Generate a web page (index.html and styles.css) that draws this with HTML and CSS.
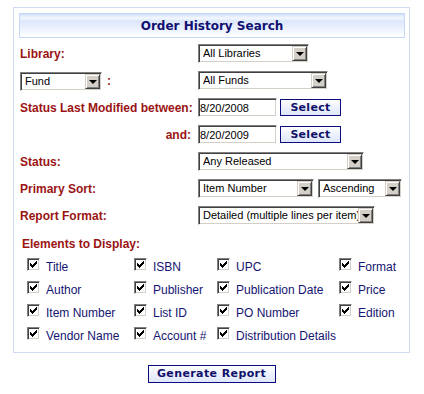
FILE: index.html
```html
<!DOCTYPE html>
<html lang="en">
<head>
    <meta charset="UTF-8">
    <title>Order History Search</title>
    <link rel="stylesheet" href="styles.css">
</head>
<body>
    <div class="panel">
        <div class="panel-title">Order History Search</div>

        <div class="form-rows">
            <div class="lbl">Library:</div>
            <div class="fld">
                <span class="combo w-lib"><select><option>All Libraries</option></select><span class="drop"></span></span>
            </div>

            <div class="lbl">
                <span class="combo w-fund"><select><option>Fund</option></select><span class="drop"></span></span>
                <span class="colon">:</span>
            </div>
            <div class="fld">
                <span class="combo w-funds"><select><option>All Funds</option></select><span class="drop"></span></span>
            </div>

            <div class="lbl">Status Last Modified between:</div>
            <div class="fld date-row">
                <input type="text" class="date" value="8/20/2008">
                <button type="button" class="btn btn-select">Select</button>
            </div>

            <div class="lbl right">and:</div>
            <div class="fld date-row">
                <input type="text" class="date" value="8/20/2009">
                <button type="button" class="btn btn-select">Select</button>
            </div>

            <div class="lbl">Status:</div>
            <div class="fld">
                <span class="combo w-status"><select><option>Any Released</option></select><span class="drop"></span></span>
            </div>

            <div class="lbl">Primary Sort:</div>
            <div class="fld">
                <span class="combo w-sort"><select><option>Item Number</option></select><span class="drop"></span></span>
                <span class="combo w-order"><select><option>Ascending</option></select><span class="drop"></span></span>
            </div>

            <div class="lbl">Report Format:</div>
            <div class="fld">
                <span class="combo w-format"><select><option>Detailed (multiple lines per item)</option></select><span class="drop"></span></span>
            </div>
        </div>

        <div class="elements-title">Elements to Display:</div>
        <div class="elements">
            <label class="el"><span class="cb"><svg width="7" height="7" viewBox="0 0 7 7"><path d="M0 2V5H1V6H2V7H3V6H4V5H5V4H6V3H7V0H6V1H5V2H4V3H3V4H2V3H1V2Z"/></svg></span><span>Title</span></label>
            <label class="el"><span class="cb"><svg width="7" height="7" viewBox="0 0 7 7"><path d="M0 2V5H1V6H2V7H3V6H4V5H5V4H6V3H7V0H6V1H5V2H4V3H3V4H2V3H1V2Z"/></svg></span><span>ISBN</span></label>
            <label class="el"><span class="cb"><svg width="7" height="7" viewBox="0 0 7 7"><path d="M0 2V5H1V6H2V7H3V6H4V5H5V4H6V3H7V0H6V1H5V2H4V3H3V4H2V3H1V2Z"/></svg></span><span>UPC</span></label>
            <label class="el"><span class="cb"><svg width="7" height="7" viewBox="0 0 7 7"><path d="M0 2V5H1V6H2V7H3V6H4V5H5V4H6V3H7V0H6V1H5V2H4V3H3V4H2V3H1V2Z"/></svg></span><span>Format</span></label>

            <label class="el"><span class="cb"><svg width="7" height="7" viewBox="0 0 7 7"><path d="M0 2V5H1V6H2V7H3V6H4V5H5V4H6V3H7V0H6V1H5V2H4V3H3V4H2V3H1V2Z"/></svg></span><span>Author</span></label>
            <label class="el"><span class="cb"><svg width="7" height="7" viewBox="0 0 7 7"><path d="M0 2V5H1V6H2V7H3V6H4V5H5V4H6V3H7V0H6V1H5V2H4V3H3V4H2V3H1V2Z"/></svg></span><span>Publisher</span></label>
            <label class="el"><span class="cb"><svg width="7" height="7" viewBox="0 0 7 7"><path d="M0 2V5H1V6H2V7H3V6H4V5H5V4H6V3H7V0H6V1H5V2H4V3H3V4H2V3H1V2Z"/></svg></span><span>Publication Date</span></label>
            <label class="el"><span class="cb"><svg width="7" height="7" viewBox="0 0 7 7"><path d="M0 2V5H1V6H2V7H3V6H4V5H5V4H6V3H7V0H6V1H5V2H4V3H3V4H2V3H1V2Z"/></svg></span><span>Price</span></label>

            <label class="el"><span class="cb"><svg width="7" height="7" viewBox="0 0 7 7"><path d="M0 2V5H1V6H2V7H3V6H4V5H5V4H6V3H7V0H6V1H5V2H4V3H3V4H2V3H1V2Z"/></svg></span><span>Item Number</span></label>
            <label class="el"><span class="cb"><svg width="7" height="7" viewBox="0 0 7 7"><path d="M0 2V5H1V6H2V7H3V6H4V5H5V4H6V3H7V0H6V1H5V2H4V3H3V4H2V3H1V2Z"/></svg></span><span>List ID</span></label>
            <label class="el"><span class="cb"><svg width="7" height="7" viewBox="0 0 7 7"><path d="M0 2V5H1V6H2V7H3V6H4V5H5V4H6V3H7V0H6V1H5V2H4V3H3V4H2V3H1V2Z"/></svg></span><span>PO Number</span></label>
            <label class="el"><span class="cb"><svg width="7" height="7" viewBox="0 0 7 7"><path d="M0 2V5H1V6H2V7H3V6H4V5H5V4H6V3H7V0H6V1H5V2H4V3H3V4H2V3H1V2Z"/></svg></span><span>Edition</span></label>

            <label class="el"><span class="cb"><svg width="7" height="7" viewBox="0 0 7 7"><path d="M0 2V5H1V6H2V7H3V6H4V5H5V4H6V3H7V0H6V1H5V2H4V3H3V4H2V3H1V2Z"/></svg></span><span>Vendor Name</span></label>
            <label class="el"><span class="cb"><svg width="7" height="7" viewBox="0 0 7 7"><path d="M0 2V5H1V6H2V7H3V6H4V5H5V4H6V3H7V0H6V1H5V2H4V3H3V4H2V3H1V2Z"/></svg></span><span>Account #</span></label>
            <label class="el"><span class="cb"><svg width="7" height="7" viewBox="0 0 7 7"><path d="M0 2V5H1V6H2V7H3V6H4V5H5V4H6V3H7V0H6V1H5V2H4V3H3V4H2V3H1V2Z"/></svg></span><span>Distribution Details</span></label>
        </div>
    </div>

    <div class="actions">
        <button type="button" class="btn btn-generate">Generate Report</button>
    </div>
</body>
</html>
```

FILE: styles.css
```css
body {
    font-family: "Liberation Sans", Arial, sans-serif;
    font-size: 12px;
    margin: 0;
    padding: 0;
    background-color: #fff;
    color: #000;
}

.panel {
    width: 397px;
    box-sizing: border-box;
    margin: 7px 0 0 13px;
    padding: 5px 4px 7px 5px;
    border: 1px solid #cfdaf3;
}

.panel-title {
    height: 25px;
    box-sizing: border-box;
    padding-top: 1px;
    border: 1px solid #c6d6f5;
    background: linear-gradient(#d3e0fa 0, #f3f7fe 18%, #dce7fc 30%, #eef3fe 70%, #fff 100%);
    color: #101070;
    font-family: "DejaVu Sans", Verdana, sans-serif;
    font-weight: bold;
    font-size: 12px;
    line-height: 23px;
    text-align: center;
}

.form-rows {
    display: grid;
    grid-template-columns: 178px auto;
    row-gap: 8px;
    align-items: center;
    margin-top: 6px;
    padding-left: 1px;
}

.lbl {
    display: flex;
    align-items: center;
    height: 19px;
    padding-top: 1px;
    box-sizing: border-box;
    color: #9a1414;
    font-weight: bold;
}

.lbl.right {
    justify-content: flex-end;
    padding-right: 7px;
}

.colon {
    margin-left: 5px;
}

.fld {
    display: flex;
    align-items: center;
    gap: 4px;
    height: 19px;
}

.fld.date-row {
    gap: 3px;
}

/* classic sunken combo box */
.combo {
    display: inline-flex;
    height: 19px;
    box-sizing: border-box;
    border: 1px solid;
    border-color: #808080 #fff #fff #808080;
    box-shadow: inset 1px 1px #404040, inset -1px -1px #d4d0c8;
    padding: 1px;
    background: #fff;
}

.combo select {
    -webkit-appearance: none;
    appearance: none;
    flex: 1;
    min-width: 0;
    border: none;
    outline: none;
    background: #fff;
    font-family: "Liberation Sans", Arial, sans-serif;
    font-size: 11px;
    color: #000;
    padding: 0 0 0 3px;
    margin: 0;
    height: 15px;
    line-height: 15px;
}

.drop {
    width: 15px;
    height: 15px;
    box-sizing: border-box;
    background: #d4d0c8;
    border: 1px solid;
    border-color: #d4d0c8 #404040 #404040 #d4d0c8;
    box-shadow: inset 1px 1px #fff, inset -1px -1px #808080;
    display: flex;
    align-items: center;
    justify-content: center;
}

.drop::after {
    content: "";
    width: 0;
    height: 0;
    border-left: 4px solid transparent;
    border-right: 4px solid transparent;
    border-top: 4px solid #000;
    margin-top: 1px;
}

.w-lib { width: 111px; }
.w-fund { width: 82px; }
.w-funds { width: 130px; }
.w-status { width: 166px; }
.w-sort { width: 116px; }
.w-order { width: 84px; }
.w-format { width: 177px; }

.date {
    width: 79px;
    height: 19px;
    box-sizing: border-box;
    margin: 0;
    padding: 0 0 0 1px;
    border: 1px solid;
    border-color: #808080 #fff #fff #808080;
    box-shadow: inset 1px 1px #404040, inset -1px -1px #d4d0c8;
    font-family: "Liberation Sans", Arial, sans-serif;
    font-size: 11px;
    color: #000;
    outline: none;
}

.btn {
    font-family: "DejaVu Sans", Verdana, sans-serif;
    font-weight: bold;
    font-size: 11px;
    color: #10106a;
    border: 1px solid #0c0c80;
    background: linear-gradient(#ffffff 0, #eef2fd 45%, #dfe7fb 100%);
    padding: 0;
    margin: 0;
    cursor: pointer;
}

.btn-select {
    width: 61px;
    height: 17px;
    line-height: 15px;
    letter-spacing: 0.3px;
}

.elements-title {
    margin-top: 12px;
    padding-left: 3px;
    color: #9a1414;
    font-weight: bold;
    line-height: 14px;
}

.elements {
    display: grid;
    grid-template-columns: 107px 83px 122px auto;
    grid-auto-rows: 18px;
    row-gap: 5px;
    margin-top: 7px;
    padding-left: 8px;
}

.el {
    display: flex;
    align-items: flex-start;
    color: #141472;
    white-space: nowrap;
    line-height: 14px;
}

.el span:last-child {
    margin-top: 2px;
}

.cb {
    width: 13px;
    height: 13px;
    box-sizing: border-box;
    flex-shrink: 0;
    border: 1px solid;
    border-color: #808080 #fff #fff #808080;
    box-shadow: inset 1px 1px #404040, inset -1px -1px #d4d0c8;
    background: #fff;
    margin-right: 6px;
    display: flex;
    align-items: center;
    justify-content: center;
}

.cb svg {
    display: block;
    fill: #000;
}

.actions {
    width: 397px;
    margin: 12px 0 0 13px;
    display: flex;
    justify-content: center;
}

.btn-generate {
    width: 128px;
    height: 18px;
    line-height: 16px;
    letter-spacing: 0.4px;
}
```
